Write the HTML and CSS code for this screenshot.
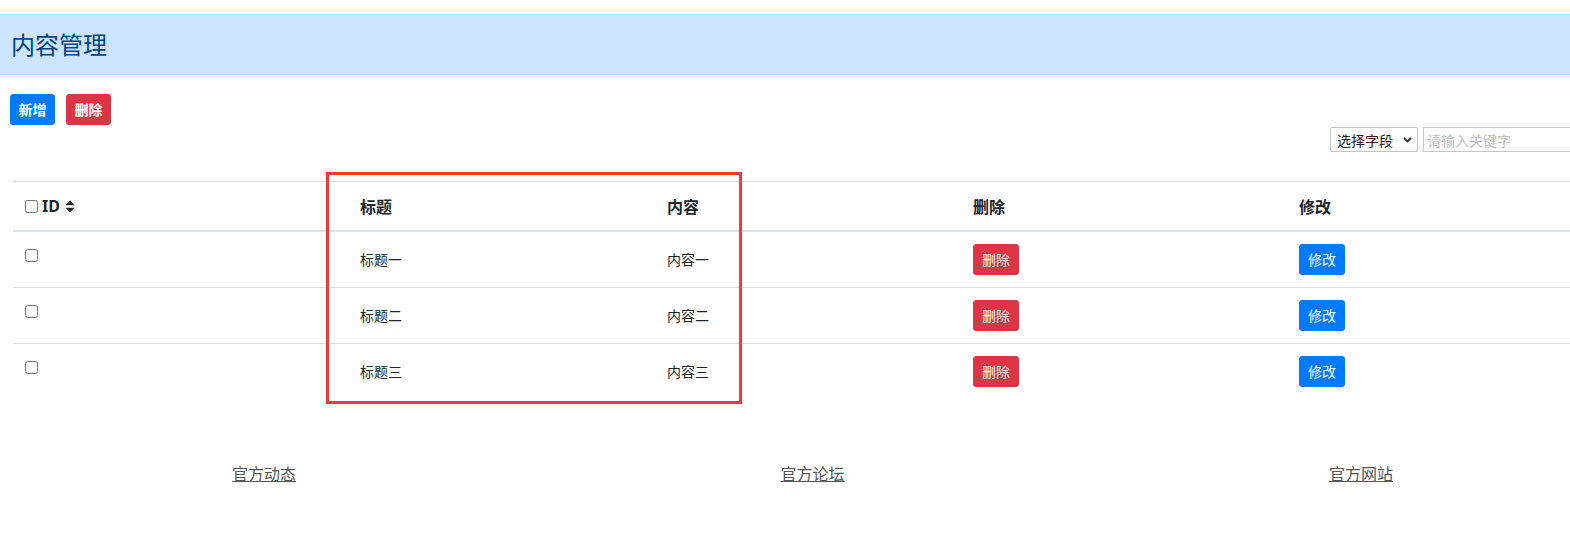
FILE: index.html
```html
<html>

<head>
    <title>内容管理</title>
    <meta charset="utf-8">
    <link rel="stylesheet" href="styles.css">
</head>

<body>
    <div class="page">
        <div class="title-bar">内容管理</div>

        <div class="toolbar">
            <button class="btn btn-primary">新增</button>
            <button class="btn btn-danger">删除</button>
        </div>

        <div class="search">
            <div class="select-wrap">
                <select class="field-select">
                    <option>选择字段</option>
                </select>
                <svg class="chevron" width="9" height="6" viewBox="0 0 9 6">
                    <path d="M1 1 L4.5 4.5 L8 1" fill="none" stroke="#333" stroke-width="1.8" />
                </svg>
            </div>
            <input class="keyword" type="text" placeholder="请输入关键字">
        </div>

        <table class="grid">
            <thead>
                <tr>
                    <th class="col-id">
                        <span class="id-head">
                            <input type="checkbox" class="check">
                            <span>ID</span>
                            <svg class="sort" width="10" height="13" viewBox="0 0 10 13">
                                <path d="M5 0.5 L9.5 5.2 L0.5 5.2 Z" fill="#212529" />
                                <path d="M0.5 7.8 L9.5 7.8 L5 12.5 Z" fill="#212529" />
                            </svg>
                        </span>
                    </th>
                    <th class="col-title">标题</th>
                    <th class="col-content">内容</th>
                    <th class="col-del">删除</th>
                    <th class="col-edit">修改</th>
                </tr>
            </thead>
            <tbody>
                <tr>
                    <td class="cell-check"><input type="checkbox" class="check"></td>
                    <td>标题一</td>
                    <td>内容一</td>
                    <td><button class="btn btn-sm btn-danger">删除</button></td>
                    <td><button class="btn btn-sm btn-primary">修改</button></td>
                </tr>
                <tr>
                    <td class="cell-check"><input type="checkbox" class="check"></td>
                    <td>标题二</td>
                    <td>内容二</td>
                    <td><button class="btn btn-sm btn-danger">删除</button></td>
                    <td><button class="btn btn-sm btn-primary">修改</button></td>
                </tr>
                <tr>
                    <td class="cell-check"><input type="checkbox" class="check"></td>
                    <td>标题三</td>
                    <td>内容三</td>
                    <td><button class="btn btn-sm btn-danger">删除</button></td>
                    <td><button class="btn btn-sm btn-primary">修改</button></td>
                </tr>
            </tbody>
        </table>

        <!-- annotation box drawn over the title/content columns -->
        <div class="highlight"></div>

        <div class="footer">
            <a href="#">官方动态</a>
            <a href="#">官方论坛</a>
            <a href="#">官方网站</a>
        </div>
    </div>
</body>

</html>
```

FILE: styles.css
```css
html,
body {
    overflow: hidden;
}

body {
    margin: 0;
    padding-top: 14px;
    font-family: "Noto Sans", "Noto Sans CJK SC", sans-serif;
    color: #212529;
    background: #fff;
}

.page {
    position: relative;
    width: 1623px;
}

.title-bar {
    width: 1570px;
    height: 61px;
    box-sizing: border-box;
    padding-left: 11px;
    background: #cce5ff;
    border-top: 1px solid #b8daff;
    border-bottom: 1px solid #b8daff;
    color: #004085;
    font-family: "Noto Sans CJK SC", sans-serif;
    font-size: 24px;
    line-height: 57px;
}

.toolbar {
    display: flex;
    gap: 11px;
    margin-top: 19px;
    padding-left: 10px;
}

.btn {
    border: 1px solid transparent;
    border-radius: 3px;
    color: #fff;
    font-family: "Noto Sans CJK SC", sans-serif;
    font-size: 14px;
    font-weight: 700;
    width: 45px;
    height: 31px;
    padding: 0;
    line-height: 29px;
    cursor: pointer;
}

.btn-sm {
    font-weight: 400;
    width: 46px;
}

.btn-primary {
    background: #007bff;
    border-color: #007bff;
}

.btn-danger {
    background: #dc3545;
    border-color: #dc3545;
}

.search {
    display: flex;
    justify-content: flex-end;
    gap: 5px;
    margin-top: 2px;
}

.select-wrap {
    position: relative;
}

.field-select {
    appearance: none;
    -webkit-appearance: none;
    width: 88px;
    height: 25px;
    border: 1px solid #c4c4c4;
    border-radius: 2px;
    background: #fff;
    padding: 0 0 0 6px;
    font-family: "Noto Sans CJK SC", sans-serif;
    font-size: 14px;
    color: #222;
}

.chevron {
    position: absolute;
    right: 6px;
    top: 10px;
}

.keyword {
    width: 200px;
    height: 25px;
    box-sizing: border-box;
    border: 1px solid #c8c8c8;
    padding: 0 3px;
    font-family: "Noto Sans CJK SC", sans-serif;
    font-size: 14px;
}

.keyword::placeholder {
    color: #c0c0c0;
}

.grid {
    margin-top: 29px;
    margin-left: 13px;
    width: 1610px;
    border-collapse: collapse;
    font-family: "Noto Sans CJK SC", sans-serif;
    font-size: 14px;
    table-layout: fixed;
}

.grid th {
    text-align: left;
    font-size: 16px;
    font-weight: 700;
    line-height: 24px;
    padding: 12px;
    border-top: 1px solid #dee2e6;
    border-bottom: 2px solid #dee2e6;
    vertical-align: middle;
}

.grid td {
    padding: 12px;
    border-top: 1px solid #dee2e6;
    line-height: 21px;
    vertical-align: middle;
}

.grid .cell-check {
    vertical-align: top;
}

.cell-check .check {
    display: block;
    margin: 5px 0 0 0;
}

.check {
    width: 13px;
    height: 13px;
    margin: 0;
}

.col-id {
    width: 311px;
}

.col-title {
    width: 283px;
}

.col-content {
    width: 282px;
}

.col-del {
    width: 302px;
}

.id-head {
    display: flex;
    align-items: center;
    gap: 4px;
}

.id-head span {
    font-family: "Noto Sans", sans-serif;
    font-weight: 700;
}

.sort {
    margin-left: 1px;
}

.highlight {
    position: absolute;
    left: 326px;
    top: 158px;
    width: 410px;
    height: 226px;
    border: 3px solid #f73838;
}

.footer {
    display: grid;
    grid-template-columns: repeat(3, 548.5px);
    padding-left: 232px;
    margin-top: 62px;
    font-family: "Noto Sans CJK SC", sans-serif;
    font-size: 16px;
    line-height: 24px;
}

.footer a {
    color: #555;
}
```
